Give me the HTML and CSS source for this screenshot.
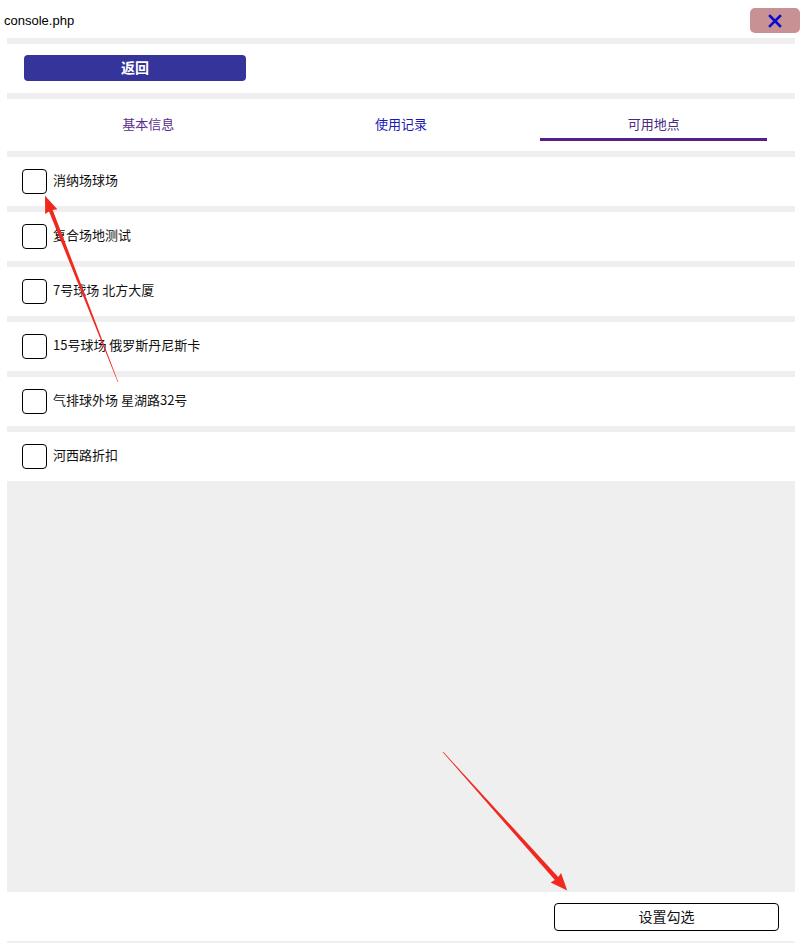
FILE: index.html
```html
<!DOCTYPE html>
<html lang="zh-CN">
<head>
    <meta charset="UTF-8">
    <meta name="viewport" content="width=device-width, initial-scale=1.0">
    <title>console.php</title>
    <link rel="stylesheet" href="styles.css">
</head>
<body>
    <div class="titulo">
        <span class="titulo-texto">console.php</span>
        <button class="cerrar" type="button">
            <svg width="14" height="14" viewBox="0 0 14 14">
                <path d="M2 2 L12 12 M12 2 L2 12" stroke="#0a0ad0" stroke-width="2.6" stroke-linecap="square"/>
            </svg>
        </button>
    </div>

    <div class="panel">
        <div class="seccion volver">
            <button class="btn-volver" type="button">返回</button>
        </div>

        <div class="seccion pestanas">
            <div class="pestana p-basico">基本信息</div>
            <div class="pestana p-uso">使用记录</div>
            <div class="pestana p-lugar activa">可用地点</div>
        </div>

        <div class="lista" id="lista_lugares">
        </div>

        <div class="seccion pie">
            <button class="btn-marcar" type="button">设置勾选</button>
        </div>
    </div>

    <svg class="flechas" width="804" height="943" viewBox="0 0 804 943">
        <g transform="translate(118 382) rotate(-111.4)">
            <polygon points="0,-0.3 184,-2 183,-6.5 200,0 183,6.5 184,2 0,0.3" fill="#f0281e"/>
        </g>
        <g transform="translate(443 752) rotate(48.1)">
            <polygon points="0,-0.3 170,-2.3 169,-7 186,0 169,7 170,2.3 0,0.3" fill="#f0281e"/>
        </g>
    </svg>

    <script>
        const lugares = [
            '消纳场球场',
            '复合场地测试',
            '7号球场 北方大厦',
            '15号球场 俄罗斯丹尼斯卡',
            '气排球外场 星湖路32号',
            '河西路折扣'
        ];

        const lista = document.getElementById('lista_lugares');
        lugares.forEach(nombre => {
            const fila = document.createElement('label');
            fila.classList.add('fila');
            fila.innerHTML = `<span class="caja"></span><span class="nombre">${nombre}</span>`;
            lista.appendChild(fila);
        });
    </script>
</body>
</html>
```

FILE: styles.css
```css
html, body {
    margin: 0;
    padding: 0;
}
body {
    font-family: "Liberation Sans", "Noto Sans CJK SC", sans-serif;
    font-size: 13px;
    color: #111;
    background: #fff;
    width: 804px;
    height: 943px;
    display: flex;
    flex-direction: column;
    position: relative;
    overflow: hidden;
}
.titulo {
    height: 38px;
    display: flex;
    align-items: center;
    justify-content: space-between;
    padding: 0 4px 0 4px;
}
.titulo-texto {
    font-size: 13px;
    color: #000;
    margin-top: 3px;
}
.cerrar {
    width: 50px;
    height: 25px;
    margin-top: 3px;
    border: none;
    border-radius: 5px;
    background-color: #c89294;
    display: flex;
    align-items: center;
    justify-content: center;
    padding: 0;
}
.panel {
    flex: 1;
    margin: 0 9px 0 7px;
    background-color: #efefef;
    display: flex;
    flex-direction: column;
    padding: 6px 0 2px;
    gap: 6px;
}
.seccion {
    background: #fff;
}
.volver {
    height: 49px;
    display: flex;
    align-items: center;
    padding-left: 17px;
}
.btn-volver {
    width: 222px;
    height: 26px;
    background-color: #35349a;
    color: #fff;
    border: none;
    border-radius: 4px;
    font-family: "Noto Sans CJK SC", sans-serif;
    font-size: 14px;
    font-weight: 600;
    padding: 0 0 3px;
    margin-top: -1px;
}
.pestanas {
    height: 52px;
    display: flex;
    padding: 0 15px;
}
.pestana {
    flex: 1;
    display: flex;
    align-items: center;
    justify-content: center;
    font-family: "Noto Sans CJK SC", sans-serif;
    font-size: 13px;
    position: relative;
    padding-bottom: 4px;
}
.p-basico {
    color: #5a2d8c;
}
.p-uso {
    color: #1a18b4;
}
.p-lugar {
    color: #4a2a7e;
}
.activa::after {
    content: "";
    position: absolute;
    left: 13px;
    right: 13px;
    bottom: 10px;
    height: 3px;
    background-color: #55208a;
}
.lista {
    flex: 1;
    display: flex;
    flex-direction: column;
    gap: 6px;
}
.fila {
    height: 49px;
    background: #fff;
    display: flex;
    align-items: center;
    padding-left: 15px;
    font-family: "Noto Sans CJK SC", sans-serif;
    font-size: 13px;
    color: #111;
}
.caja {
    width: 23px;
    height: 23px;
    border: 1px solid #000;
    border-radius: 4px;
    margin-right: 6px;
    flex-shrink: 0;
}
.nombre {
    margin-bottom: 4px;
}
.pie {
    height: 49px;
    margin-top: -6px;
    display: flex;
    align-items: center;
    justify-content: flex-end;
    padding-right: 16px;
}
.btn-marcar {
    width: 225px;
    height: 28px;
    background: #fff;
    border: 1px solid #000;
    border-radius: 4px;
    font-family: "Noto Sans CJK SC", sans-serif;
    font-size: 14px;
    color: #111;
    padding: 0 0 2px;
}
.flechas {
    position: absolute;
    left: 0;
    top: 0;
    pointer-events: none;
}
```
